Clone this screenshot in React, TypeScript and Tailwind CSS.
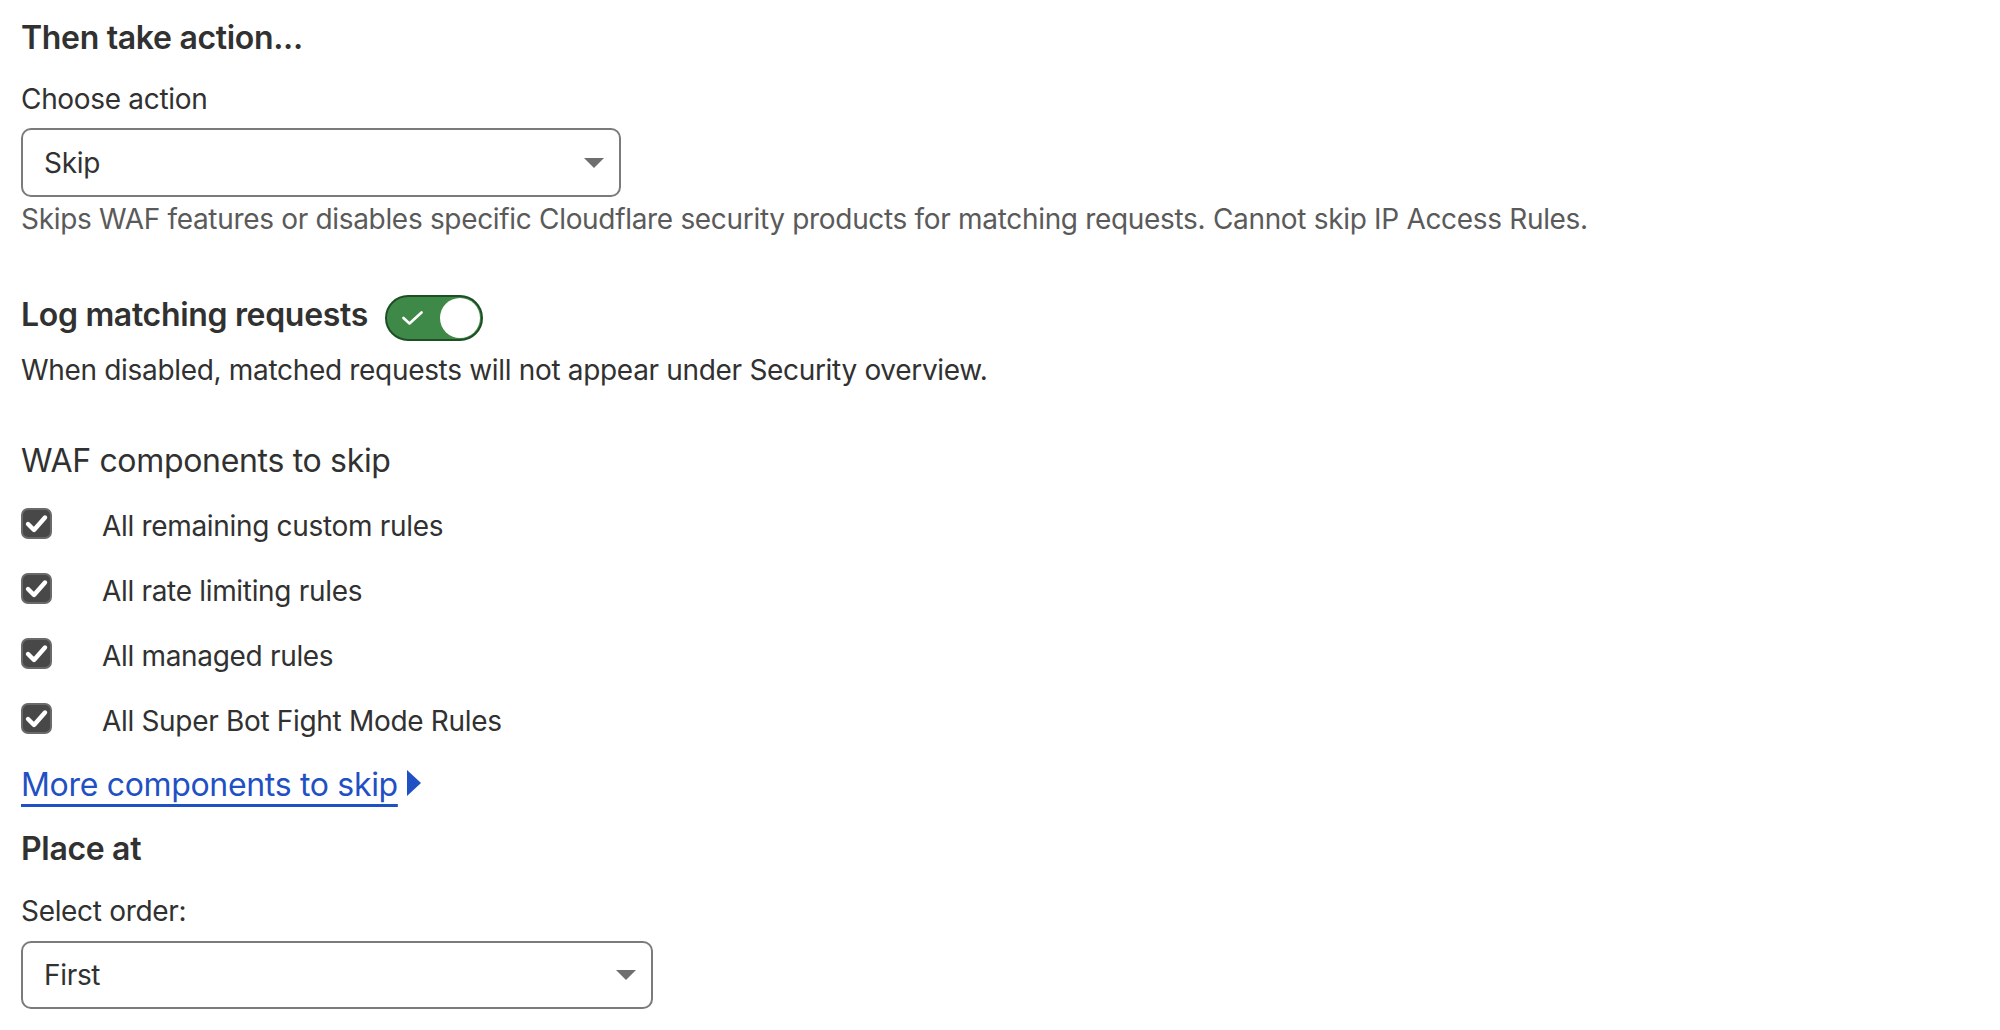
import React from "react";

function SelectBox({ value, width }: { value: string; width: string }) {
  return (
    <div
      className={`${width} flex items-center justify-between rounded-[10px] border-2 border-[#7b7b7b] bg-white pl-[21px] pr-[15px] text-[28px] text-[#313131]`}
    >
      <span>{value}</span>
      <svg width="20" height="10" viewBox="0 0 20 10" className="shrink-0">
        <polygon points="0,0 20,0 10,10" fill="#6e6e6e" />
      </svg>
    </div>
  );
}

function Toggle() {
  return (
    <div className="mt-[4px] flex h-[46px] w-[98px] items-center justify-between rounded-full border-2 border-[#1d4f25] bg-[#3f8948] pl-[15px] pr-[1px]">
      <svg width="21" height="14" viewBox="0 0 21 14" className="shrink-0">
        <path
          d="M1.5 7 L7.5 12.5 L19.5 1.5"
          fill="none"
          stroke="white"
          strokeWidth="2.6"
          strokeLinecap="round"
          strokeLinejoin="round"
        />
      </svg>
      <div className="h-[40px] w-[40px] shrink-0 rounded-full bg-white" />
    </div>
  );
}

function Checkbox() {
  return (
    <div className="mt-[2px] flex h-[31px] w-[31px] shrink-0 items-center justify-center rounded-[7px] border-2 border-[#6a6a6a] bg-[#484848]">
      <svg width="27" height="27" viewBox="0 0 27 27" className="shrink-0">
        <path
          d="M5 14 L11 20 L22 7.5"
          fill="none"
          stroke="white"
          strokeWidth="4.4"
          strokeLinecap="round"
          strokeLinejoin="round"
        />
      </svg>
    </div>
  );
}

const components = [
  "All remaining custom rules",
  "All rate limiting rules",
  "All managed rules",
  "All Super Bot Fight Mode Rules",
];

export default function App() {
  return (
    <div className="min-h-screen bg-white px-[21px] pt-[14px] font-['Inter','Noto_Sans',sans-serif] tracking-[-0.02em] text-[#313131]">
      <h2 className="text-[32px] font-semibold leading-[48px]">Then take action...</h2>
      <div className="mt-[17px] text-[28px] leading-[40px]">Choose action</div>
      <div className="mt-[9px]">
        <SelectBox value="Skip" width="w-[600px] h-[69px]" />
      </div>
      <p className="mt-[2px] text-[28px] leading-[40px] text-[#5a5a5a]">
        Skips WAF features or disables specific Cloudflare security products for matching requests. Cannot skip IP Access Rules.
      </p>

      <div className="mt-[52px] flex h-[48px] items-start gap-[17px]">
        <h2 className="text-[32px] font-semibold leading-[48px]">Log matching requests</h2>
        <Toggle />
      </div>
      <p className="mt-[11px] text-[28px] leading-[40px]">
        When disabled, matched requests will not appear under Security overview.
      </p>

      <h3 className="mt-[47px] text-[32px] leading-[48px]">WAF components to skip</h3>
      <div className="mt-[21px] flex flex-col gap-[25px]">
        {components.map((c) => (
          <label key={c} className="flex h-[40px] items-start gap-[50px] text-[28px] leading-[40px]">
            <Checkbox />
            <span>{c}</span>
          </label>
        ))}
      </div>

      <div className="mt-[20px] flex items-center gap-[9px] leading-[48px]">
        <a
          href="#"
          className="text-[32px] text-[#1f50c4] underline decoration-[3px] underline-offset-[8px]"
        >
          More components to skip
        </a>
        <svg width="14" height="26" viewBox="0 0 14 26" className="mb-[4px] shrink-0">
          <polygon points="0,0 14,13 0,26" fill="#1f50c4" />
        </svg>
      </div>

      <h2 className="mt-[16px] text-[32px] font-semibold leading-[48px]">Place at</h2>
      <div className="mt-[18px] text-[28px] leading-[40px]">Select order:</div>
      <div className="mt-[10px]">
        <SelectBox value="First" width="w-[632px] h-[68px]" />
      </div>
    </div>
  );
}
